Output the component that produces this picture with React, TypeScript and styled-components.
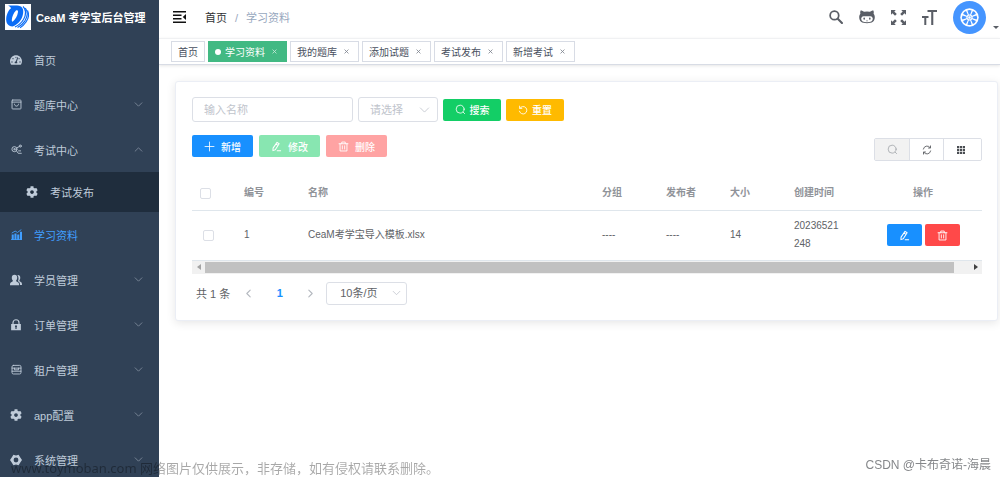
import React, { ReactNode } from "react";
import styled, { createGlobalStyle, css } from "styled-components";
import { FaTachometerAlt, FaCog } from "react-icons/fa";

const GlobalStyle = createGlobalStyle`
  * { box-sizing: border-box; }
  body {
    margin: 0;
    background: #fff;
    color: #606266;
    font-family: "Liberation Sans", "Noto Sans CJK SC", sans-serif;
    font-size: 11px;
  }
  button, input, select { font: inherit; margin: 0; }
  a { color: inherit; text-decoration: none; }
  svg { display: block; flex: none; }
`;

/* ---------- icons ---------- */

type IconProps = { size?: number; children: ReactNode; box?: number; weight?: number };

const Line = ({ size = 11, box = 16, weight = 1, children }: IconProps) => (
  <svg width={size} height={size} viewBox={`0 0 ${box} ${box}`} fill="none" stroke="currentColor"
    strokeWidth={weight} strokeLinecap="round" strokeLinejoin="round" aria-hidden="true">
    {children}
  </svg>
);

const Chevron = ({ dir = "down", size = 9, weight = 1.4 }: { dir?: "down" | "up" | "left" | "right"; size?: number; weight?: number }) => {
  const d = { down: "M2 5l6 6 6-6", up: "M2 11l6-6 6 6", left: "M11 2L5 8l6 6", right: "M5 2l6 6-6 6" }[dir];
  return <Line size={size} weight={weight}><path d={d} /></Line>;
};
const SearchIcon = () => <Line weight={1.2}><circle cx="7.5" cy="7.5" r="5.8" /><path d="M12 12l2 2" /></Line>;
const PlusIcon = () => <Line weight={1.2}><path d="M8 1.5v13M1.5 8h13" /></Line>;
const ResetIcon = () => <Line size={10} weight={1.4}><path d="M3 5.2A6 6 0 1 1 2.3 10M2.6 1.8v3.6h3.6" /></Line>;
const PenIcon = () => (
  <Line weight={1.5}><path d="M8.8 2l3 2-5.6 8.600-3.400 1.400.2-3.600zM7.200 4.400l3 2M9 14.300h5" /></Line>
);
const TrashIcon = () => (
  <Line weight={1.3}><path d="M1.500 4h13M3 4v10.500h10V4M5.500 4V1.500h5V4M6.300 7v4.700M9.700 7v4.700" /></Line>
);
const RefreshIcon = () => (
  <Line size={10} weight={1.5}>
    <path d="M13.8 9.5A6 6 0 0 1 3.2 12M2.2 6.5A6 6 0 0 1 12.8 4M13.600 1.500v3.300h-3.200M2.400 14.500v-3.300h3.200" />
  </Line>
);
const GridIcon = () => (
  <svg width="8" height="8" viewBox="0 0 8 8" fill="#4a4d52" aria-hidden="true">
    {[0, 3, 6].map((y) => [0, 3, 6].map((x) => <rect key={`${x}${y}`} x={x} y={y} width="2.3" height="2.3" />))}
  </svg>
);
const BagIcon = () => <Line weight={1.3}><rect x="1.5" y="1.5" width="13" height="13" rx="1" /><path d="M1.5 4.5h13M5 7.5c.3 4 5.7 4 6 0" /></Line>;
const ShareIcon = () => (
  <Line weight={1.3}>
    <circle cx="5" cy="7.5" r="3.7" /><circle cx="5" cy="7.5" r="1" /><circle cx="13.5" cy="3" r="1.5" />
    <path d="M8.5 5.5L12 3.8M8 10l2.5 3.5H15M11 10h3" />
  </Line>
);
const ChartIcon = () => (
  <svg width="11" height="11" viewBox="0 0 16 16" fill="currentColor" aria-hidden="true">
    <path d="M1 8h3v7H1zM5 6.5h3V15H5zM9 8h3v7H9zM13 4h3v11h-3zM0 15h16v1H0z" />
    <path d="M1 6l5-3 3.5 2L15 .8" fill="none" stroke="currentColor" strokeWidth="1.3" />
  </svg>
);
const PeopleIcon = () => (
  <svg width="12" height="12" viewBox="0 0 16 16" fill="currentColor" aria-hidden="true">
    <path d="M6 1c2.5 0 3.7 1.7 3.6 4-.1 1.900-.8 3-1.400 3.600 0 1 .3 1.400 1.700 1.900 1.800.7 2.200 1.700 2.200 4.500H0c0-2.800.4-3.800 2.200-4.500 1.300-.5 1.600-.9 1.600-1.900C3 7.900 2.400 6.800 2.400 5 2.400 2.700 3.600 1 6 1z" />
    <path d="M10 1.500c2.400-.3 3.700 1.200 3.700 3.500 0 1.700-.6 2.700-1.200 3.300 0 1 .3 1.500 1.400 2 1.700.7 2.100 1.700 2.100 4.200h-2.700c0-3-.7-4.200-2.900-5 1.300-2 1.500-5.500-.4-8z" />
  </svg>
);
const LockIcon = () => (
  <svg width="12" height="12" viewBox="0 0 16 16" fill="currentColor" aria-hidden="true">
    <path d="M4 7V5a4 4 0 0 1 8 0v2" fill="none" stroke="currentColor" strokeWidth="1.6" />
    <path fillRule="evenodd" d="M1.500 6.500h13V15h-13zM8 8.300a1.500 1.500 0 0 0-.8 2.700v2.200h1.600V11A1.500 1.500 0 0 0 8 8.300z" />
  </svg>
);
const ShopIcon = () => (
  <Line weight={1.3}><rect x="1.5" y="2" width="13" height="12.5" rx="2" /><path d="M1.5 6h13M1.500 10.500h13M5 6v2.500h6V6" /></Line>
);
const HexGearIcon = () => (
  <svg width="12" height="12" viewBox="0 0 16 16" fill="currentColor" aria-hidden="true">
    <path fillRule="evenodd" d="M4.500 1L8 2l3.500-1 2 3.300L16 8l-2.500 3.700-2 3.300L8 14l-3.500 1-2-3.300L0 8l2.500-3.700zM8 4.800a3.200 3.200 0 1 0 0 6.400 3.200 3.200 0 0 0 0-6.400z" />
  </svg>
);
const FoldIcon = () => (
  <svg width="14" height="12" viewBox="0 0 14 12" fill="#111" aria-hidden="true">
    <path d="M0 0h13v1.500H0zM0 3.500h8.500V5H0zM0 7h8.500v1.500H0zM0 10.500h13V12H0zM13 3v6L9.800 6z" />
  </svg>
);
const NavSearchIcon = () => <Line size={14} weight={2}><circle cx="6.2" cy="6.2" r="4.9" /><path d="M10 10l4.800 4.800" strokeWidth="2.4" /></Line>;
const CatIcon = () => (
  <svg width="16" height="14" viewBox="0 0 16 14" aria-hidden="true">
    <path fill="currentColor" d="M1.600.4c1.400 0 2.700.7 3.700 1.400a13 13 0 0 1 5.400 0c1-.7 2.300-1.400 3.700-1.400.5 1.200.5 2.500.2 3.300.8 1 1.200 2 1.200 3.400 0 4.500-2.500 6.200-7.800 6.200S.2 11.600.2 7.100c0-1.400.4-2.400 1.200-3.400-.3-.8-.3-2.100.2-3.300z" />
    <path fill="#fff" d="M4.500 6.200c1.300-.2 2.300.1 3.500.1s2.200-.3 3.500-.1c1.500.2 2.300 1.300 2.300 2.600 0 2.400-2 3.500-5.800 3.500s-5.800-1.100-5.800-3.500c0-1.300.8-2.400 2.300-2.600z" />
    <g fill="currentColor"><ellipse cx="5.2" cy="8.6" rx=".8" ry="1.200" /><ellipse cx="10.8" cy="8.6" rx=".8" ry="1.200" /><path d="M7.300 10.600h1.400v.6H7.300z" /></g>
  </svg>
);
const ExpandIcon = () => (
  <svg width="15" height="15" viewBox="0 0 15 15" fill="currentColor" aria-hidden="true">
    {[0, 90, 180, 270].map((a) => (
      <path key={a} transform={`rotate(${a} 7.5 7.5)`} d="M0 0h4.800L3.300 1.500 5.800 4 4 5.800 1.500 3.300 0 4.800z" />
    ))}
  </svg>
);
const SizeIcon = () => (
  <svg width="15" height="15" viewBox="0 0 15 15" fill="currentColor" aria-hidden="true">
    <path d="M5.500 0H15v2h-3.700v13H9.200V2H5.500zM0 6h6.500v2H4.300v7h-2V8H0z" />
  </svg>
);
const WheelAvatar = () => (
  <svg width="33" height="33" viewBox="0 0 33 33" aria-hidden="true">
    <circle cx="16.5" cy="16.5" r="16.5" fill="#4595ff" />
    <circle cx="16.5" cy="16.5" r="9.2" fill="#fff" />
    {[0, 45, 90, 135, 180, 225, 270, 315].map((a) => (
      <path key={a} transform={`rotate(${a} 16.5 16.5)`} fill="#4595ff" d="M15.800 13.400L14.400 9.500q2.100-1.200 4.200 0l-1.400 3.900z" />
    ))}
    <circle cx="16.5" cy="16.5" r="1.600" fill="none" stroke="#4595ff" strokeWidth=".6" />
  </svg>
);
const BrandMark = () => (
  <svg width="26" height="26" viewBox="0 0 26 26" aria-hidden="true">
    <path fill="#fff" d="M0 0h26v26H0z" />
    <path fill="#0a6cf5" fillRule="evenodd" d="M3 1.500h9c5 0 7 3.500 6 8.500-1 6-5 10.500-10.500 12.500C3 22 .8 19 1.200 14.500 1.600 10 3.800 5.500 6 4.200 5.400 3 4.500 2.200 3 1.500zM11 6.500C8.500 9 7 12.500 6.800 16c0 1.200.3 1.600.8 1.700C10.500 15.500 12.400 12 13 8c.2-1.400-.8-2.100-2-1.500z" />
    <g fill="none" stroke="#0a6cf5" strokeWidth="1.2">
      <path d="M18 2.500c3.200 3 3.200 8 .5 13-2 3.300-5 6-8.500 7.500" />
      <path d="M20.300 4c2.700 3.500 2.200 8.500-.3 12.800-2 3-4.500 5.200-7.500 6.700" />
      <path d="M22.500 6.500c1.700 3.500 1 8-1.500 11.500-1.700 2.500-3.500 4.300-6 5.700" />
    </g>
  </svg>
);
const TriLeft = () => <svg width="4" height="6" viewBox="0 0 4 6" fill="#a3a3a3" aria-hidden="true"><path d="M4 0v6L0 3z" /></svg>;
const TriRight = () => <svg width="4" height="6" viewBox="0 0 4 6" fill="#404040" aria-hidden="true"><path d="M0 0v6l4-3z" /></svg>;

/* ---------- shell ---------- */

const Shell = styled.div`
  display: grid;
  grid-template-columns: 159px minmax(0, 1fr);
  height: 100vh;
  overflow: hidden;
`;
const Sidebar = styled.aside`
  background: #304156;
  color: #bfcbd9;
  overflow: hidden;
`;
const Brand = styled.a`
  display: flex;
  align-items: center;
  gap: 5px;
  height: 37px;
  padding: 0 5px 3px;
  color: #fff;
  font-weight: 700;
  white-space: nowrap;
`;
const MenuItem = styled.a<{ $active?: boolean; $sub?: boolean }>`
  display: flex;
  align-items: center;
  height: ${(p) => (p.$sub ? 40 : 45)}px;
  padding: 0 16px 0 ${(p) => (p.$sub ? 26 : 10)}px;
  background: ${(p) => (p.$sub ? "#1f2d3d" : "transparent")};
  color: ${(p) => (p.$active ? "#409eff" : "#bfcbd9")};
`;
const MenuIcon = styled.span`
  display: flex;
  justify-content: center;
  width: 12px;
  margin-right: 12px;
`;
const MenuArrow = styled.span`
  margin-left: auto;
  color: #8793a3;
`;
const Main = styled.main`
  min-width: 0;
  overflow: hidden;
`;

/* ---------- header ---------- */

const Navbar = styled.header`
  display: flex;
  align-items: center;
  height: 38px;
  padding: 0 1px 4px 14px;
  color: #5a5e66;
`;
const IconButton = styled.button`
  display: flex;
  padding: 0;
  border: 0;
  background: none;
  color: inherit;
  cursor: pointer;
`;
const Crumbs = styled.nav`
  display: flex;
  align-items: baseline;
  gap: 8px;
  margin-left: 18px;
  color: #97a8be;
  a { color: #303133; }
`;
const NavTools = styled.div`
  display: flex;
  align-items: center;
  gap: 16px;
  margin-left: auto;
`;
const AvatarButton = styled(IconButton)`
  align-items: flex-end;
  gap: 7px;
`;
const Caret = styled.span`
  margin-bottom: 5px;
  border: 3px solid transparent;
  border-top-color: #5a5e66;
  border-bottom: 0;
`;
const Tags = styled.nav`
  display: flex;
  gap: 3px;
  height: 27px;
  padding: 2px 12px;
  border-top: 1px solid #f0f1f3;
  border-bottom: 1px solid #d8dce5;
  box-shadow: 0 1px 3px rgba(0, 0, 0, 0.1);
  font-size: 10px;
`;
const Tag = styled.div<{ $active?: boolean }>`
  display: flex;
  align-items: center;
  gap: 4px;
  height: 21px;
  padding: 0 6px;
  border: 1px solid ${(p) => (p.$active ? "#42b983" : "#d8dce5")};
  background: ${(p) => (p.$active ? "#42b983" : "#fff")};
  color: ${(p) => (p.$active ? "#fff" : "#495060")};
  white-space: nowrap;
`;
const Dot = styled.span`
  width: 6px;
  height: 6px;
  border-radius: 50%;
  background: #fff;
`;
const TagClose = styled(IconButton)`
  align-items: center;
  justify-content: center;
  width: 11px;
  height: 11px;
  opacity: 0.7;
`;

/* ---------- content ---------- */

const Card = styled.section`
  margin: 16px 2px 0 16px;
  padding: 15px 15px 15px 16px;
  border: 1px solid #ebeef5;
  border-radius: 3px;
  background: #fff;
  box-shadow: 0 2px 10px rgba(0, 0, 0, 0.1);
`;
const FilterBar = styled.form`
  display: flex;
  align-items: center;
  gap: 5px;
`;
const fieldBox = css`
  border: 1px solid #dcdfe6;
  border-radius: 3px;
  background: #fff;
  outline: none;
`;
const TextField = styled.input`
  ${fieldBox}
  width: 161px;
  height: 25px;
  padding: 0 11px;
  color: #606266;
  &::placeholder { color: #c0c4cc; }
`;
const SelectWrap = styled.label<{ $muted?: boolean }>`
  position: relative;
  display: block;
  color: #c0c4cc;
  select {
    ${fieldBox}
    display: block;
    appearance: none;
    width: ${(p) => (p.$muted ? 80 : 81)}px;
    height: ${(p) => (p.$muted ? 25 : 23)}px;
    padding: 0 ${(p) => (p.$muted ? 11 : 13)}px;
    color: ${(p) => (p.$muted ? "#c0c4cc" : "#606266")};
  }
  svg {
    position: absolute;
    top: 50%;
    right: ${(p) => (p.$muted ? 8 : 6)}px;
    transform: translateY(-50%);
    pointer-events: none;
  }
`;
const tones = { primary: "#1890ff", success: "#13ce66", warning: "#ffba00", danger: "#ff4949" };
const Button = styled.button<{ $tone: keyof typeof tones; $size?: "wide" | "icon" }>`
  display: inline-flex;
  align-items: center;
  justify-content: center;
  gap: ${(p) => (p.$size === "wide" ? 6 : 4)}px;
  width: ${(p) => (p.$size === "wide" ? 61 : p.$size === "icon" ? 35 : 58)}px;
  height: 22px;
  padding: 0;
  border: 0;
  border-radius: 2px;
  background: ${(p) => tones[p.$tone]};
  color: #fff;
  font-size: 10px;
  font-weight: 500;
  cursor: pointer;
  &:disabled { opacity: 0.5; color: #fff; cursor: not-allowed; }
`;
const ActionBar = styled.div`
  display: flex;
  align-items: flex-start;
  gap: 6px;
  margin-top: 13px;
`;
const ToolGroup = styled.div`
  display: flex;
  margin: 3px 0 0 auto;
  border: 1px solid #dcdfe6;
  border-radius: 2px;
  overflow: hidden;
`;
const ToolButton = styled(IconButton)<{ $on?: boolean; $menu?: boolean }>`
  align-items: center;
  justify-content: center;
  width: ${(p) => (p.$menu ? 38 : 34)}px;
  height: 21px;
  padding-right: ${(p) => (p.$menu ? 4 : 0)}px;
  background: ${(p) => (p.$on ? "#f2f2f2" : "#fff")};
  color: ${(p) => (p.$on ? "#a3a6ab" : "#606266")};
  & + & { border-left: 1px solid #dcdfe6; }
`;
const Table = styled.table`
  width: 100%;
  margin-top: 16px;
  border-collapse: collapse;
  table-layout: fixed;
  font-size: 10px;
  line-height: 18px;
  th, td {
    padding: 6px 8px;
    border-bottom: 1px solid #dfe6ec;
    text-align: left;
  }
  th { height: 33px; color: #909399; font-weight: 700; }
  td { height: 50px; }
  th:last-child, td:last-child { text-align: center; }
`;
const Col = styled.col<{ $w?: number }>`
  width: ${(p) => (p.$w ? `${p.$w}px` : "auto")};
`;
const Check = styled.input<{ $indent?: boolean }>`
  ${fieldBox}
  display: block;
  appearance: none;
  width: 11px;
  height: 11px;
  border-radius: 2px;
  && { margin-left: ${(p) => (p.$indent ? 3 : 0)}px; }
`;
const RowActions = styled.div`
  display: flex;
  justify-content: center;
  gap: 3px;
`;
const ScrollTrack = styled.div`
  display: grid;
  grid-template-columns: 13px minmax(0, 1fr) 13px;
  align-items: center;
  justify-items: center;
  height: 13px;
  background: #f1f1f1;
`;
const ScrollRail = styled.div`
  width: 100%;
`;
const ScrollThumb = styled.div`
  width: 98%;
  height: 11px;
  background: #c1c1c1;
`;
const Pager = styled.nav`
  display: flex;
  align-items: center;
  height: 23px;
  margin: 8px 0 0 4px;
  color: #606266;
`;
const PageButton = styled(IconButton)<{ $current?: boolean }>`
  justify-content: center;
  width: 31px;
  color: ${(p) => (p.$current ? "#1890ff" : "#b4b8bf")};
  font-weight: 700;
`;
const Total = styled.span`
  margin-right: 3px;
`;

const Watermark = styled.div<{ $end?: boolean }>`
  position: fixed;
  ${(p) => (p.$end ? "right: 9px; bottom: 3px;" : "left: 11px; bottom: 0;")}
  color: ${(p) => (p.$end ? "#85878a" : "rgba(0, 0, 0, 0.34)")};
  font-family: ${(p) => (p.$end ? '"Liberation Sans"' : '"Noto Sans"')}, "Noto Sans CJK SC", sans-serif;
  font-size: ${(p) => (p.$end ? 12 : 13)}px;
  line-height: 18px;
  white-space: nowrap;
  pointer-events: none;
`;

/* ---------- data ---------- */

type Entry = { label: string; icon: ReactNode; arrow?: "up" | "down"; active?: boolean; sub?: boolean };
const menu: Entry[] = [
  { label: "首页", icon: <FaTachometerAlt size={12} /> },
  { label: "题库中心", icon: <BagIcon />, arrow: "down" },
  { label: "考试中心", icon: <ShareIcon />, arrow: "up" },
  { label: "考试发布", icon: <FaCog size={12} />, sub: true },
  { label: "学习资料", icon: <ChartIcon />, active: true },
  { label: "学员管理", icon: <PeopleIcon />, arrow: "down" },
  { label: "订单管理", icon: <LockIcon />, arrow: "down" },
  { label: "租户管理", icon: <ShopIcon />, arrow: "down" },
  { label: "app配置", icon: <FaCog size={12} />, arrow: "down" },
  { label: "系统管理", icon: <HexGearIcon />, arrow: "down" },
];
const tags = ["首页", "学习资料", "我的题库", "添加试题", "考试发布", "新增考试"];
const widths = [44, 64, undefined, 64, 64, 64, 78, 118];
const heads = ["编号", "名称", "分组", "发布者", "大小", "创建时间", "操作"];

export default function App() {
  return (
    <Shell>
      <GlobalStyle />
      <Sidebar>
        <Brand href="#"><BrandMark />CeaM 考学宝后台管理</Brand>
        {menu.map((m) => (
          <MenuItem key={m.label} href="#" $active={m.active} $sub={m.sub}>
            <MenuIcon>{m.icon}</MenuIcon>
            {m.label}
            {m.arrow && <MenuArrow><Chevron dir={m.arrow} /></MenuArrow>}
          </MenuItem>
        ))}
      </Sidebar>
      <Main>
        <Navbar>
          <IconButton aria-label="收起菜单"><FoldIcon /></IconButton>
          <Crumbs><a href="#">首页</a><span>/</span><span>学习资料</span></Crumbs>
          <NavTools>
            <IconButton aria-label="搜索"><NavSearchIcon /></IconButton>
            <IconButton aria-label="源码"><CatIcon /></IconButton>
            <IconButton aria-label="全屏"><ExpandIcon /></IconButton>
            <IconButton aria-label="字号"><SizeIcon /></IconButton>
            <AvatarButton aria-label="账户"><WheelAvatar /><Caret /></AvatarButton>
          </NavTools>
        </Navbar>
        <Tags>
          {tags.map((t, i) => (
            <Tag key={t} $active={i === 1}>
              {i === 1 && <Dot />}
              <a href="#">{t}</a>
              {i > 0 && (
                <TagClose aria-label={`关闭${t}`}>
                  <Line size={5} box={6}><path d="M1 1l4 4M5 1L1 5" /></Line>
                </TagClose>
              )}
            </Tag>
          ))}
        </Tags>
        <Card>
          <FilterBar onSubmit={(e) => e.preventDefault()}>
            <TextField placeholder="输入名称" aria-label="名称" />
            <SelectWrap $muted>
              <select aria-label="分组"><option>请选择</option></select>
              <Chevron size={11} weight={1.2} />
            </SelectWrap>
            <Button $tone="success" type="submit"><SearchIcon />搜索</Button>
            <Button $tone="warning" type="reset"><ResetIcon />重置</Button>
          </FilterBar>
          <ActionBar>
            <Button $tone="primary" $size="wide"><PlusIcon />新增</Button>
            <Button $tone="success" $size="wide" disabled><PenIcon />修改</Button>
            <Button $tone="danger" $size="wide" disabled><TrashIcon />删除</Button>
            <ToolGroup>
              <ToolButton $on aria-label="显示搜索"><SearchIcon /></ToolButton>
              <ToolButton aria-label="刷新"><RefreshIcon /></ToolButton>
              <ToolButton $menu aria-label="列设置"><GridIcon /></ToolButton>
            </ToolGroup>
          </ActionBar>
          <Table>
            <colgroup>{widths.map((w, i) => <Col key={i} $w={w} />)}</colgroup>
            <thead>
              <tr>
                <th><Check type="checkbox" aria-label="全选" /></th>
                {heads.map((h) => <th key={h}>{h}</th>)}
              </tr>
            </thead>
            <tbody>
              <tr>
                <td><Check $indent type="checkbox" aria-label="选择第1行" /></td>
                <td>1</td>
                <td>CeaM考学宝导入模板.xlsx</td>
                <td>----</td>
                <td>----</td>
                <td>14</td>
                <td>20236521<br />248</td>
                <td>
                  <RowActions>
                    <Button $tone="primary" $size="icon" aria-label="修改"><PenIcon /></Button>
                    <Button $tone="danger" $size="icon" aria-label="删除"><TrashIcon /></Button>
                  </RowActions>
                </td>
              </tr>
            </tbody>
          </Table>
          <ScrollTrack>
            <TriLeft />
            <ScrollRail><ScrollThumb /></ScrollRail>
            <TriRight />
          </ScrollTrack>
          <Pager>
            <Total>共 1 条</Total>
            <PageButton aria-label="上一页"><Chevron dir="left" weight={2} /></PageButton>
            <PageButton $current>1</PageButton>
            <PageButton aria-label="下一页"><Chevron dir="right" weight={2} /></PageButton>
            <SelectWrap>
              <select aria-label="每页条数"><option>10条/页</option></select>
              <Chevron />
            </SelectWrap>
          </Pager>
        </Card>
      </Main>
      <Watermark>www.toymoban.com 网络图片仅供展示，非存储，如有侵权请联系删除。</Watermark>
      <Watermark $end>CSDN @卡布奇诺-海晨</Watermark>
    </Shell>
  );
}
